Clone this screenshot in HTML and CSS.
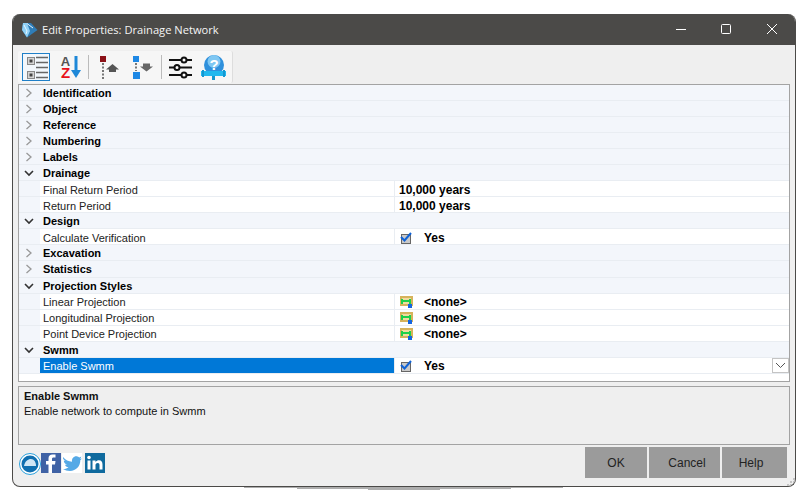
FILE: index.html
```html
<!DOCTYPE html>
<html lang="en">
<head>
<meta charset="utf-8">
<title>Edit Properties: Drainage Network</title>
<link rel="stylesheet" href="styles.css">
</head>
<body>
<div class="window">
  <header class="titlebar">
    <svg class="app-icon" width="16" height="16" viewBox="0 0 16 16"><path d="M1 1L9 1L15.500 8L5 15.500L0 8Z" fill="#2f7db8"/><path d="M1 1L5 1L8 9L5 15.500L0 8Z" fill="#8fd0f5"/><path d="M2 3L5 9L4 12M5 1.500L11 6" stroke="#e8f6ff" fill="none"/></svg>
    <span class="title">Edit Properties: Drainage Network</span>
    <div class="controls">
      <svg class="ctl" width="46" height="31" viewBox="0 0 46 31"><path d="M19 15.500H29" stroke="#fff" fill="none"/></svg>
      <svg class="ctl" width="46" height="31" viewBox="0 0 46 31"><rect x="18.500" y="10.500" width="9" height="9" rx="1" stroke="#fff" fill="none"/></svg>
      <svg class="ctl" width="46" height="31" viewBox="0 0 46 31"><path d="M18 10L28 20M28 10L18 20" stroke="#fff" fill="none"/></svg>
    </div>
  </header>
  <div class="content">
    <div class="toolbar">
      <button class="tool selected" aria-label="Categorized">
        <svg width="26" height="26" viewBox="0 0 26 26"><rect x="4.500" y="3.500" width="7" height="7" fill="#d4d4d4" stroke="#888"/><rect x="6.500" y="5.500" width="3" height="3" fill="#444"/><rect x="4.500" y="17.500" width="7" height="7" fill="#d4d4d4" stroke="#888"/><rect x="6.500" y="19.500" width="3" height="3" fill="#444"/><path d="M13 3.500H25M13 8.500H25M13 13.500H25M13 18.500H25M13 23.500H25" stroke="#666" stroke-width="1.500"/></svg>
      </button>
      <button class="tool az" aria-label="Alphabetical">
        <span class="letters"><span class="az-a">A</span><span class="az-z">Z</span></span>
        <svg width="10" height="24" viewBox="0 0 10 24"><path d="M5 1V17" stroke="#1e88d8" stroke-width="3"/><path d="M0 15L5 23L10 15Z" fill="#1e88d8"/></svg>
      </button>
      <span class="sep"></span>
      <button class="tool" aria-label="Previous">
        <svg width="24" height="26" viewBox="0 0 24 26"><rect x="2" y="2" width="6" height="6" fill="#8c1218"/><path d="M5 9V25" stroke="#777" stroke-width="2" stroke-dasharray="2 1.500"/><path d="M8 15.500L14.500 10L21 15.500H18V18H11V15.500Z" fill="#555"/></svg>
      </button>
      <button class="tool" aria-label="Next">
        <svg width="24" height="26" viewBox="0 0 24 26"><rect x="2" y="2" width="6" height="6" fill="#1e88e5"/><rect x="2" y="18" width="7" height="7" fill="#1e88e5"/><path d="M5 9V17" stroke="#777" stroke-width="2" stroke-dasharray="2 1.500"/><path d="M9 12.500L15.500 17.500L22 12.500H19V9.500H12V12.500Z" fill="#666"/></svg>
      </button>
      <span class="sep sep-tight"></span>
      <button class="tool" aria-label="Settings">
        <svg width="26" height="26" viewBox="0 0 26 26"><path d="M2 6H25M2 13.500H25M2 21H25" stroke="#111" stroke-width="2"/><circle cx="17" cy="6" r="2.500" fill="#fff" stroke="#111" stroke-width="2"/><circle cx="10" cy="13.500" r="2.500" fill="#fff" stroke="#111" stroke-width="2"/><circle cx="17" cy="21" r="2.500" fill="#fff" stroke="#111" stroke-width="2"/></svg>
      </button>
      <button class="tool" aria-label="Help">
        <svg width="28" height="28" viewBox="0 0 28 28"><circle cx="15" cy="12" r="10" fill="#2f90dc"/><circle cx="15" cy="8.500" r="6.500" fill="#7fc7f2"/><text x="15" y="17" class="q">?</text><rect x="2" y="18" width="25" height="5" fill="#21b8ee"/><rect x="3" y="17" width="2" height="7" fill="#1497d0"/><rect x="24" y="17" width="2" height="7" fill="#1497d0"/><rect x="13" y="23" width="3" height="4" fill="#1497d0"/></svg>
      </button>
    </div>
    <div class="grid">
      <div class="row cat"><span class="gut"><svg class="chev" width="10" height="10" viewBox="0 0 10 10"><path d="M2.500 1L7 5L2.500 9"/></svg></span><b>Identification</b></div>
      <div class="row cat"><span class="gut"><svg class="chev" width="10" height="10" viewBox="0 0 10 10"><path d="M2.500 1L7 5L2.500 9"/></svg></span><b>Object</b></div>
      <div class="row cat"><span class="gut"><svg class="chev" width="10" height="10" viewBox="0 0 10 10"><path d="M2.500 1L7 5L2.500 9"/></svg></span><b>Reference</b></div>
      <div class="row cat"><span class="gut"><svg class="chev" width="10" height="10" viewBox="0 0 10 10"><path d="M2.500 1L7 5L2.500 9"/></svg></span><b>Numbering</b></div>
      <div class="row cat"><span class="gut"><svg class="chev" width="10" height="10" viewBox="0 0 10 10"><path d="M2.500 1L7 5L2.500 9"/></svg></span><b>Labels</b></div>
      <div class="row cat"><span class="gut"><svg class="chev open" width="10" height="10" viewBox="0 0 10 10"><path d="M1 3L5 7L9 3"/></svg></span><b>Drainage</b></div>
      <div class="row item low"><span class="gut"></span><span class="name">Final Return Period</span><span class="val"><b class="strong">10,000 years</b></span></div>
      <div class="row item low"><span class="gut"></span><span class="name">Return Period</span><span class="val"><b class="strong">10,000 years</b></span></div>
      <div class="row cat"><span class="gut"><svg class="chev open" width="10" height="10" viewBox="0 0 10 10"><path d="M1 3L5 7L9 3"/></svg></span><b>Design</b></div>
      <div class="row item low"><span class="gut"></span><span class="name">Calculate Verification</span><span class="val"><svg class="vicon" width="13" height="12" viewBox="0 0 13 12"><rect x="1.500" y="2.500" width="9" height="9" fill="#c9c9c9" stroke="#666"/><path d="M1 5L4.500 8.500L11 1" stroke="#0f62d6" stroke-width="2" fill="none"/></svg><b class="strong after-icon">Yes</b></span></div>
      <div class="row cat"><span class="gut"><svg class="chev" width="10" height="10" viewBox="0 0 10 10"><path d="M2.500 1L7 5L2.500 9"/></svg></span><b>Excavation</b></div>
      <div class="row cat tall"><span class="gut"><svg class="chev" width="10" height="10" viewBox="0 0 10 10"><path d="M2.500 1L7 5L2.500 9"/></svg></span><b>Statistics</b></div>
      <div class="row cat"><span class="gut"><svg class="chev open" width="10" height="10" viewBox="0 0 10 10"><path d="M1 3L5 7L9 3"/></svg></span><b>Projection Styles</b></div>
      <div class="row item"><span class="gut"></span><span class="name">Linear Projection</span><span class="val"><svg class="vicon" width="13" height="12" viewBox="0 0 13 12"><rect width="13" height="10" fill="#d7b35c"/><rect x="2" y="2" width="9" height="6" fill="#f0dca0"/><path d="M2 3V8M2 5H10M10 3V8" stroke="#1fd04b" stroke-width="2" fill="none"/><rect x="8" y="8" width="4" height="4" fill="#1565e0"/></svg><b class="strong after-icon">&lt;none&gt;</b></span></div>
      <div class="row item"><span class="gut"></span><span class="name">Longitudinal Projection</span><span class="val"><svg class="vicon" width="13" height="12" viewBox="0 0 13 12"><rect width="13" height="10" fill="#d7b35c"/><rect x="2" y="2" width="9" height="6" fill="#f0dca0"/><path d="M2 3V8M2 5H10M10 3V8" stroke="#1fd04b" stroke-width="2" fill="none"/><rect x="8" y="8" width="4" height="4" fill="#1565e0"/></svg><b class="strong after-icon">&lt;none&gt;</b></span></div>
      <div class="row item"><span class="gut"></span><span class="name">Point Device Projection</span><span class="val"><svg class="vicon" width="13" height="12" viewBox="0 0 13 12"><rect width="13" height="10" fill="#d7b35c"/><rect x="2" y="2" width="9" height="6" fill="#f0dca0"/><path d="M2 3V8M2 5H10M10 3V8" stroke="#1fd04b" stroke-width="2" fill="none"/><rect x="8" y="8" width="4" height="4" fill="#1565e0"/></svg><b class="strong after-icon">&lt;none&gt;</b></span></div>
      <div class="row cat"><span class="gut"><svg class="chev open" width="10" height="10" viewBox="0 0 10 10"><path d="M1 3L5 7L9 3"/></svg></span><b>Swmm</b></div>
      <div class="row item active"><span class="gut"></span><span class="name">Enable Swmm</span><span class="val"><svg class="vicon" width="13" height="12" viewBox="0 0 13 12"><rect x="1.500" y="2.500" width="9" height="9" fill="#c9c9c9" stroke="#666"/><path d="M1 5L4.500 8.500L11 1" stroke="#0f62d6" stroke-width="2" fill="none"/></svg><b class="strong after-icon">Yes</b><span class="drop"><svg width="11" height="7" viewBox="0 0 11 7"><path d="M1 1L5.500 5.500L10 1" stroke="#555" fill="none"/></svg></span></span></div>
    </div>
    <div class="help-box">
      <b>Enable Swmm</b>
      <span>Enable network to compute in Swmm</span>
    </div>
    <div class="footer">
      <div class="social">
        <svg class="globe" width="22" height="24" viewBox="0 0 22 24"><circle cx="11" cy="12" r="10.500" fill="#fff" stroke="#2aa0dc"/><circle cx="11" cy="12" r="8.500" fill="#0f6fb0"/><path d="M5 14C6 9 9 7 12 7C15 7 17 10 17 14Z" fill="#cfe6f5"/></svg>
        <svg width="20" height="20" viewBox="0 0 20 20"><rect width="20" height="20" fill="#3f62a5"/><path d="M11 20V11.500H14L14.500 8H11V6C11 5 11.500 4.500 12.500 4.500H14.500V1.500H11.500C9 1.500 7.500 3 7.500 5.500V8H5V11.500H7.500V20Z" fill="#fff"/></svg>
        <svg class="tw" width="20" height="20" viewBox="0 0 20 20"><rect width="20" height="20" fill="#fff"/><path d="M1 4C3.500 7 6.500 8.500 10 8.700C9.500 5 12.500 2.500 15.500 3.500C16.500 3.800 17 4.300 17.200 4.500L19.500 3.500L18.200 6L20 5.500L18.300 7.300C18.500 13 14 18 8 18C5 18 3 17 1 16C3 16.200 5 15.500 6.500 14.500C4.500 14.300 3.500 13 3 11.800H5C3 11 1.800 9.500 1.800 7.500L3.500 8C1.500 6.500 0.800 6 1 4Z" fill="#55a9e6"/></svg>
        <svg class="in" width="20" height="20" viewBox="0 0 20 20"><rect width="20" height="20" fill="#0f6a9e"/><rect x="2.500" y="7.500" width="3" height="9" fill="#fff"/><circle cx="4" cy="4.500" r="1.800" fill="#fff"/><path d="M7.500 7.500H10.500V9C11.500 7.800 12.500 7.300 14 7.300C16.500 7.300 17.500 9 17.500 11.500V16.500H14.500V12C14.500 10.800 14 10 12.800 10C11.500 10 10.500 10.800 10.500 12V16.500H7.500Z" fill="#fff"/></svg>
      </div>
      <div class="buttons">
        <button class="btn ok">OK</button>
        <button class="btn cancel">Cancel</button>
        <button class="btn help">Help</button>
      </div>
    </div>
    <svg class="grip" width="8" height="8" viewBox="0 0 8 8"><path d="M6 0h2v2h-2zM6 3h2v2h-2zM3 3h2v2h-2zM6 6h2v2h-2zM3 6h2v2h-2zM0 6h2v2h-2z" fill="#c4c4c4"/></svg>
  </div>
</div>
<div class="shelf">
  <div class="bar bar-1"></div>
  <div class="bar bar-2"></div>
  <div class="bar bar-3"></div>
</div>
</body>
</html>
```
FILE: styles.css
```css
* { box-sizing: border-box; }
html, body { margin: 0; padding: 0; background: #fff; }
body { padding: 14px 10px 0 12px; font-family: "Liberation Sans", Arial, sans-serif; font-size: 11px; color: #111; }
.window { width: 784px; height: 473px; display: flex; flex-direction: column; border-radius: 8px; overflow: hidden; background: #efefef; border: 1px solid #4b4a48; border-top: 0; }
.titlebar { height: 31px; flex: none; background: #4b4a48; color: #f5f5f5; display: flex; align-items: center; padding-left: 9px; }
.app-icon { margin-right: 4px; }
.title { flex: 1; font-family: "Open Sans", sans-serif; font-size: 11.15px; }
.controls { display: flex; }
.ctl { display: block; }
.content { flex: 1; display: flex; flex-direction: column; padding: 6px 5px 0 5px; min-height: 0; position: relative; }
.toolbar { width: 215px; height: 32px; flex: none; display: flex; align-items: center; gap: 5px; background: #f6f6f6; padding: 0 4px; border-right: 1px solid #ddd; border-radius: 2px; }
.tool { border: 0; background: none; padding: 0; margin: 0; width: 28px; height: 28px; display: flex; align-items: center; justify-content: center; }
.tool svg { display: block; flex: none; }
.tool.selected { border: 1px solid #1f7fc8; background: #f2f7fc; }
.tool.az { justify-content: flex-start; padding-left: 5px; }
.letters { width: 11px; flex: none; display: flex; flex-direction: column; }
.az-a { font: bold 13px/11px "Liberation Sans", sans-serif; color: #555; }
.az-z { font: bold 15px/11px "Liberation Sans", sans-serif; color: #e8101a; }
.sep { width: 1px; height: 24px; background: #bbb; margin-right: 2px; }
.sep-tight { margin: 0 -1px; }
.q { font: bold 15px "Liberation Sans", sans-serif; fill: #fff; text-anchor: middle; }
.grid { height: 298px; flex: none; margin-top: 1px; background: #fff; border: 1px solid #a3a3a3; overflow: hidden; }
.row { height: 16px; display: flex; align-items: center; background: #f3f6fb; border-bottom: 1px solid #e9edf2; }
.row.tall { height: 17px; padding-bottom: 1px; }
.gut { width: 21px; flex: none; height: 100%; display: flex; align-items: center; padding-left: 5px; background: #f3f6fb; }
.cat b { font-weight: 700; margin-left: 3px; color: #000; }
.item { background: #fff; }
.low .name, .low .val { padding-top: 2px; }
.name { width: 355px; flex: none; height: 100%; padding-left: 3px; display: flex; align-items: center; color: #222; border-right: 1px solid #e9edf2; }
.val { flex: 1; height: 100%; display: flex; align-items: center; padding-left: 4px; position: relative; }
.strong { font-size: 12px; color: #000; }
.vicon { flex: none; margin-left: 1px; }
.after-icon { margin-left: 11px; }
.active .name { background: #0078d7; color: #fff; }
.chev { fill: none; stroke: #999; stroke-width: 1.300; }
.chev.open { stroke: #333; stroke-width: 1.600; }
.drop { position: absolute; right: 0; top: 0; width: 17px; height: 15px; background: #fff; border: 1px solid #c4c4c4; display: flex; align-items: center; justify-content: center; }
.help-box { height: 59px; flex: none; margin-top: 4px; border: 1px solid #a3a3a3; padding: 3px 5px; display: flex; flex-direction: column; gap: 3px; }
.footer { flex: 1; display: flex; justify-content: space-between; padding-top: 2px; }
.social { display: flex; align-items: flex-start; padding-left: 1px; padding-top: 6px; }
.social svg { display: block; }
.globe { margin-top: -1px; }
.tw { margin-left: 1px; }
.in { margin-left: 3px; }
.buttons { display: flex; gap: 2px; padding-right: 3px; }
.btn { border: 0; background: #9b9b9b; height: 31px; font: 12px "Liberation Sans", sans-serif; color: #222; }
.ok { width: 62px; padding: 1px 0 0; }
.cancel { width: 71px; padding: 1px 0 0 5px; }
.help { width: 65px; padding: 1px 7px 0 0; }
.grip { position: absolute; right: 0; bottom: 0; display: block; }
.shelf { margin-left: 232px; display: flex; flex-direction: column; }
.bar { height: 1px; background: #adadad; }
.bar-1 { width: 319px; }
.bar-2 { width: 214px; margin-left: 53px; }
.bar-3 { width: 72px; margin-left: 124px; }
```
